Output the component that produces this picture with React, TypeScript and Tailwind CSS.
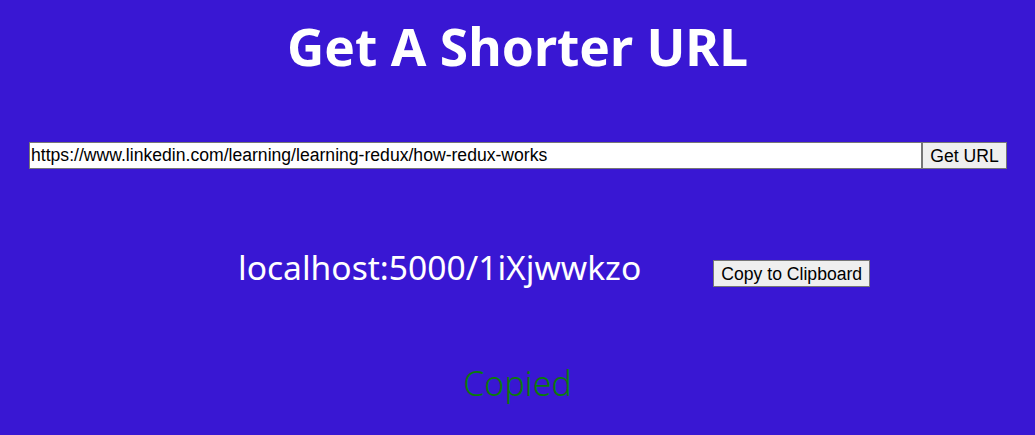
export default function App() {
  return (
    <div className="w-[1035px] h-[435px] bg-[#3917d3] overflow-hidden" style={{ fontFamily: '"Noto Sans", sans-serif' }}>
      <h1 className="text-white text-[51.5px] font-bold leading-[60px] text-center pt-[16px]">Get A Shorter URL</h1>
      <div className="flex mt-[66px] ml-[29px]">
        <input
          readOnly
          value="https://www.linkedin.com/learning/learning-redux/how-redux-works"
          className="w-[893px] h-[27px] bg-white border border-[#767676] px-[1px] text-[17.6px] text-black outline-none"
          style={{ fontFamily: '"Liberation Sans", Arial, sans-serif' }}
        />
        <button
          className="w-[85px] h-[27px] bg-[#efefef] border border-[#767676] text-[17.6px] text-black"
          style={{ fontFamily: '"Liberation Sans", Arial, sans-serif' }}
        >
          Get URL
        </button>
      </div>
      <div className="flex items-center mt-[75px]">
        <div className="ml-[238px] text-white text-[33.6px] leading-[46px]">localhost:5000/1iXjwwkzo</div>
        <button
          className="ml-[72px] mt-[12px] w-[157px] h-[27px] bg-[#efefef] border border-[#767676] text-[17.6px] text-black"
          style={{ fontFamily: '"Liberation Sans", Arial, sans-serif' }}
        >
          Copy to Clipboard
        </button>
      </div>
      <div className="text-center text-[#0b7a0b] text-[34px] font-light mt-[70px] leading-[46px]">Copied</div>
    </div>
  );
}
